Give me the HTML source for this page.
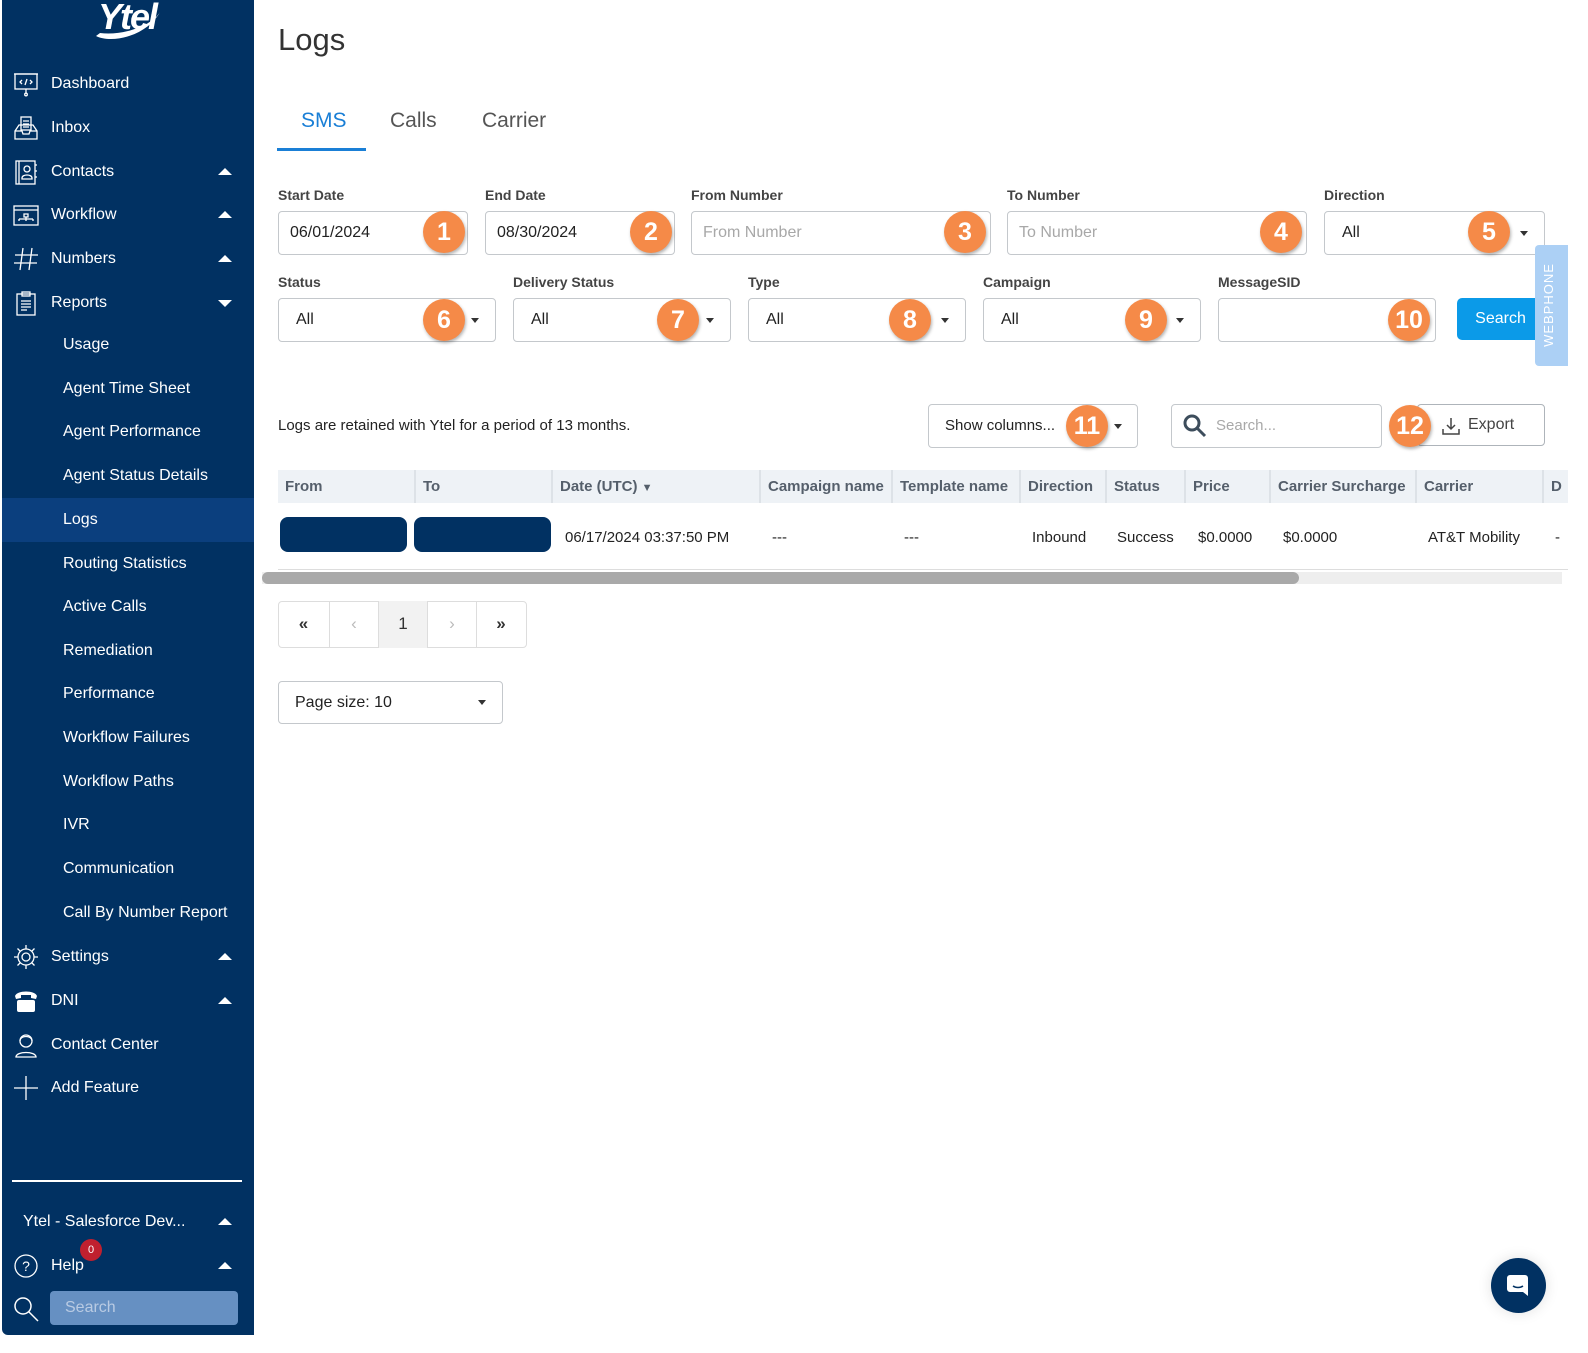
<!DOCTYPE html>
<html><head><meta charset="utf-8"><style>
*{box-sizing:border-box;margin:0;padding:0}
html,body{width:1588px;height:1353px;overflow:hidden}
body{position:relative;background:#fff;font-family:"Liberation Sans",sans-serif;color:#222}
.a{position:absolute}
#sb{left:2px;top:0;width:252px;height:1335px;background:#013162;border-radius:0 0 0 6px}
.it{position:absolute;left:51px;color:#fff;font-size:16px;line-height:20px}
.sub{left:63px}
.car{position:absolute;left:218px;width:0;height:0;border-left:7px solid transparent;border-right:7px solid transparent}
.up{border-bottom:7px solid #fff}.dn{border-top:7px solid #fff}
.ic{position:absolute;left:13px;width:26px;height:26px}
.lbl{position:absolute;font-size:14px;font-weight:bold;color:#444}
.inp{position:absolute;height:44px;border:1px solid #c4c8cc;border-radius:4px;font-size:16px;color:#222;padding:0 0 0 11px;line-height:42px;white-space:nowrap}
.ph{color:#a8a8a8}
.b{position:absolute;width:42px;height:42px;border-radius:50%;background:#f58a48;color:#fff;font-size:25px;font-weight:bold;text-align:center;line-height:42px;box-shadow:1px 2px 3px rgba(0,0,0,.3)}
.dd{position:absolute;width:0;height:0;border-left:4px solid transparent;border-right:4px solid transparent;border-top:5px solid #333}
.th{position:absolute;top:470px;height:33px;line-height:33px;font-size:15px;font-weight:bold;color:#555f6b;padding-left:7px;border-left:2px solid #dde2e7;white-space:nowrap;overflow:hidden}
.td{position:absolute;top:529px;font-size:15px;color:#222;white-space:nowrap}
.pg{position:absolute;top:601px;height:47px;width:49px;border-left:1px solid #ddd;text-align:center;line-height:46px;font-size:17px;color:#333}
</style></head><body>
<div id="sb" class="a"></div>
<div class="a" style="left:98px;top:-4px;color:#fff;font-size:36px;font-weight:bold;font-style:italic;letter-spacing:-2px">Ytel</div>
<svg class="a" style="left:92px;top:8px" width="72" height="34"><path d="M4 28 C20 36 55 28 68 4 C60 18 30 28 8 25 Z" fill="#fff"/></svg>

<svg class="ic" style="top:71px" viewBox="0 0 26 26" fill="none" stroke="#fff" stroke-width="1.3"><rect x="2" y="3" width="22" height="15"/><path d="M1 3h24M13 18v4"/><circle cx="13" cy="23.5" r="1.3"/><path d="M9 9l-2 2 2 2M17 9l2 2-2 2M14 8l-2 6"/></svg>
<svg class="ic" style="top:115px" viewBox="0 0 26 26" fill="none" stroke="#fff" stroke-width="1.3"><path d="M2 16l4-6h14l4 6v8H2zM2 16h7l1 3h6l1-3h7"/><rect x="8" y="2" width="10" height="13"/><path d="M10 6h6M10 9h6M10 12h6"/></svg>
<svg class="ic" style="top:159px" viewBox="0 0 26 26" fill="none" stroke="#fff" stroke-width="1.3"><rect x="3" y="2" width="19" height="23"/><path d="M6 2v23M22 6h2M22 12h2M22 18h2"/><circle cx="14" cy="10" r="3"/><path d="M9 19c0-4 10-4 10 0v1H9z"/></svg>
<svg class="ic" style="top:203px" viewBox="0 0 26 26" fill="none" stroke="#fff" stroke-width="1.3"><rect x="1" y="3" width="24" height="19"/><path d="M1 7h24M11 11h4v3h-4zM13 14v2M6 16h14M6 16v2M13 16v2M20 16v2"/></svg>
<svg class="ic" style="top:246px" viewBox="0 0 26 26" fill="none" stroke="#fff" stroke-width="1.3"><path d="M10 2L7 24M19 2l-3 22M2 9h23M1 17h23"/></svg>
<svg class="ic" style="top:290px" viewBox="0 0 26 26" fill="none" stroke="#fff" stroke-width="1.3"><rect x="4" y="4" width="18" height="21"/><rect x="9" y="2" width="8" height="4"/><path d="M8 11h10M8 14h10M8 17h10M8 20h6"/></svg>
<svg class="ic" style="top:944px" viewBox="0 0 26 26" fill="none" stroke="#fff" stroke-width="1.3"><circle cx="13" cy="13" r="4"/><circle cx="13" cy="13" r="8"/><path d="M13 1v4M13 21v4M1 13h4M21 13h4M4.5 4.5l3 3M18.5 18.5l3 3M4.5 21.5l3-3M18.5 7.5l3-3"/></svg>
<svg class="ic" style="top:988px" viewBox="0 0 26 26" fill="#fff"><path d="M2 8c2-6 20-6 22 0l-1 3-5-1V7H8v3l-5 1z"/><rect x="4" y="12" width="18" height="12" rx="2"/></svg>
<svg class="ic" style="top:1032px" viewBox="0 0 26 26" fill="none" stroke="#fff" stroke-width="1.3"><circle cx="13" cy="9" r="6"/><path d="M7 9c0-6 12-6 12 0M3 25c0-6 20-6 20 0z"/></svg>
<svg class="ic" style="top:1075px" viewBox="0 0 26 26" fill="none" stroke="#fff" stroke-width="1.3"><path d="M13 1v24M1 13h24"/></svg>
<svg class="ic" style="top:1253px" viewBox="0 0 26 26" fill="none" stroke="#fff" stroke-width="1.3"><circle cx="13" cy="13" r="11"/><text x="13" y="18" fill="#fff" stroke="none" font-size="14" text-anchor="middle" font-family="Liberation Sans">?</text></svg>
<svg class="ic" style="top:1296px" viewBox="0 0 26 26" fill="none" stroke="#fff" stroke-width="1.5"><circle cx="10" cy="10" r="8"/><path d="M16 16l9 9"/></svg>

<div class="a" style="left:2px;top:498px;width:252px;height:44px;background:#0b3f7e"></div>
<div class="it" style="top:74px">Dashboard</div>
<div class="it" style="top:118px">Inbox</div>
<div class="it" style="top:162px">Contacts</div><div class="car up" style="top:168px"></div>
<div class="it" style="top:205px">Workflow</div><div class="car up" style="top:211px"></div>
<div class="it" style="top:249px">Numbers</div><div class="car up" style="top:255px"></div>
<div class="it" style="top:293px">Reports</div><div class="car dn" style="top:300px"></div>
<div class="it sub" style="top:335px">Usage</div>
<div class="it sub" style="top:379px">Agent Time Sheet</div>
<div class="it sub" style="top:422px">Agent Performance</div>
<div class="it sub" style="top:466px">Agent Status Details</div>
<div class="it sub" style="top:510px">Logs</div>
<div class="it sub" style="top:554px">Routing Statistics</div>
<div class="it sub" style="top:597px">Active Calls</div>
<div class="it sub" style="top:641px">Remediation</div>
<div class="it sub" style="top:684px">Performance</div>
<div class="it sub" style="top:728px">Workflow Failures</div>
<div class="it sub" style="top:772px">Workflow Paths</div>
<div class="it sub" style="top:815px">IVR</div>
<div class="it sub" style="top:859px">Communication</div>
<div class="it sub" style="top:903px">Call By Number Report</div>
<div class="it" style="top:947px">Settings</div><div class="car up" style="top:953px"></div>
<div class="it" style="top:991px">DNI</div><div class="car up" style="top:997px"></div>
<div class="it" style="top:1035px">Contact Center</div>
<div class="it" style="top:1078px">Add Feature</div>
<div class="a" style="left:12px;top:1180px;width:230px;height:2px;background:#fff"></div>
<div class="it" style="left:23px;top:1212px">Ytel - Salesforce Dev...</div><div class="car up" style="top:1218px"></div>
<div class="it" style="top:1256px">Help</div><div class="car up" style="top:1262px"></div>
<div class="a" style="left:80px;top:1239px;width:22px;height:22px;border-radius:50%;background:#c0202f;color:#fff;font-size:11px;text-align:center;line-height:22px">0</div>
<div class="a" style="left:50px;top:1291px;width:188px;height:34px;background:#6690c2;border-radius:4px;color:#b9cbe3;font-size:16px;line-height:34px;padding-left:15px">Search</div>

<div class="a" style="left:278px;top:22px;font-size:31px;color:#333">Logs</div>
<div class="a" style="left:301px;top:109px;font-size:21px;color:#1a7fd6">SMS</div>
<div class="a" style="left:390px;top:109px;font-size:21px;color:#555">Calls</div>
<div class="a" style="left:482px;top:109px;font-size:21px;color:#555">Carrier</div>
<div class="a" style="left:277px;top:148px;width:89px;height:3px;background:#1a7fd6"></div>

<div class="lbl" style="left:278px;top:187px">Start Date</div>
<div class="lbl" style="left:485px;top:187px">End Date</div>
<div class="lbl" style="left:691px;top:187px">From Number</div>
<div class="lbl" style="left:1007px;top:187px">To Number</div>
<div class="lbl" style="left:1324px;top:187px">Direction</div>
<div class="inp" style="left:278px;top:211px;width:190px">06/01/2024</div>
<div class="inp" style="left:485px;top:211px;width:190px">08/30/2024</div>
<div class="inp ph" style="left:691px;top:211px;width:300px">From Number</div>
<div class="inp ph" style="left:1007px;top:211px;width:300px">To Number</div>
<div class="inp" style="left:1324px;top:211px;width:221px;padding-left:17px">All</div>
<div class="dd" style="left:1520px;top:231px"></div>

<div class="lbl" style="left:278px;top:274px">Status</div>
<div class="lbl" style="left:513px;top:274px">Delivery Status</div>
<div class="lbl" style="left:748px;top:274px">Type</div>
<div class="lbl" style="left:983px;top:274px">Campaign</div>
<div class="lbl" style="left:1218px;top:274px">MessageSID</div>
<div class="inp" style="left:278px;top:298px;width:218px;padding-left:17px">All</div><div class="dd" style="left:471px;top:318px"></div>
<div class="inp" style="left:513px;top:298px;width:218px;padding-left:17px">All</div><div class="dd" style="left:706px;top:318px"></div>
<div class="inp" style="left:748px;top:298px;width:218px;padding-left:17px">All</div><div class="dd" style="left:941px;top:318px"></div>
<div class="inp" style="left:983px;top:298px;width:218px;padding-left:17px">All</div><div class="dd" style="left:1176px;top:318px"></div>
<div class="inp" style="left:1218px;top:298px;width:218px"></div>
<div class="a" style="left:1457px;top:298px;width:87px;height:42px;background:#0b9ae8;border-radius:5px;color:#fff;font-size:16px;text-align:center;line-height:42px">Search</div>
<div class="a" style="left:1535px;top:245px;width:33px;height:121px;background:#acd0f5;border-radius:4px 0 0 4px;overflow:hidden"><div style="position:absolute;left:-44px;top:50px;width:120px;height:20px;transform:rotate(-90deg);color:#fff;font-size:13px;text-align:center;letter-spacing:1px">WEBPHONE</div></div>

<div class="a" style="left:278px;top:417px;font-size:15px">Logs are retained with Ytel for a period of 13 months.</div>
<div class="inp" style="left:928px;top:404px;width:210px;padding-left:16px;font-size:15px">Show columns...</div><div class="dd" style="left:1114px;top:424px"></div>
<div class="inp ph" style="left:1171px;top:404px;width:211px;padding-left:44px;font-size:15px">Search...</div>
<svg class="a" style="left:1182px;top:413px" width="26" height="26" fill="none" stroke="#3d4d5c" stroke-width="3"><circle cx="10" cy="10" r="7"/><path d="M15 15l8 8"/></svg>
<div class="inp" style="left:1417px;top:404px;width:128px;height:42px;line-height:40px;color:#444;padding-left:50px;border-color:#aeb4ba">Export</div>
<svg class="a" style="left:1441px;top:416px" width="20" height="20" fill="none" stroke="#444" stroke-width="1.5"><path d="M10 2v11M6 9l4 4 4-4M2 13v5h16v-5"/></svg>

<div class="b" style="left:423px;top:211px">1</div>
<div class="b" style="left:630px;top:211px">2</div>
<div class="b" style="left:944px;top:211px">3</div>
<div class="b" style="left:1260px;top:211px">4</div>
<div class="b" style="left:1468px;top:211px">5</div>
<div class="b" style="left:423px;top:299px">6</div>
<div class="b" style="left:657px;top:299px">7</div>
<div class="b" style="left:889px;top:299px">8</div>
<div class="b" style="left:1125px;top:299px">9</div>
<div class="b" style="left:1388px;top:299px">10</div>
<div class="b" style="left:1066px;top:405px">11</div>
<div class="b" style="left:1389px;top:405px">12</div>

<div class="a" style="left:278px;top:470px;width:1290px;height:33px;background:#eef2f6"></div>
<div class="th" style="left:278px;width:136px;border-left:none">From</div>
<div class="th" style="left:414px;width:137px">To</div>
<div class="th" style="left:551px;width:208px">Date (UTC) <span style="font-size:11px">&#9660;</span></div>
<div class="th" style="left:759px;width:132px">Campaign name</div>
<div class="th" style="left:891px;width:128px">Template name</div>
<div class="th" style="left:1019px;width:86px">Direction</div>
<div class="th" style="left:1105px;width:79px">Status</div>
<div class="th" style="left:1184px;width:85px">Price</div>
<div class="th" style="left:1269px;width:146px">Carrier Surcharge</div>
<div class="th" style="left:1415px;width:127px">Carrier</div>
<div class="th" style="left:1542px;width:26px">D</div>
<div class="a" style="left:280px;top:517px;width:127px;height:35px;background:#013162;border-radius:8px"></div>
<div class="a" style="left:414px;top:517px;width:137px;height:35px;background:#013162;border-radius:8px"></div>
<div class="td" style="left:565px">06/17/2024 03:37:50 PM</div>
<div class="td" style="left:772px">---</div>
<div class="td" style="left:904px">---</div>
<div class="td" style="left:1032px">Inbound</div>
<div class="td" style="left:1117px">Success</div>
<div class="td" style="left:1198px">$0.0000</div>
<div class="td" style="left:1283px">$0.0000</div>
<div class="td" style="left:1428px">AT&amp;T Mobility</div>
<div class="td" style="left:1555px">-</div>
<div class="a" style="left:278px;top:569px;width:1290px;height:1px;background:#ddd"></div>
<div class="a" style="left:262px;top:572px;width:1300px;height:12px;background:#eee"></div>
<div class="a" style="left:262px;top:572px;width:1037px;height:12px;background:#a9a9a9;border-radius:6px"></div>

<div class="a" style="left:278px;top:601px;width:249px;height:47px;border:1px solid #ddd;border-radius:4px"></div>
<div class="pg" style="left:279px;border-left:none;font-weight:bold">&laquo;</div>
<div class="pg" style="left:329px;color:#bbb">&lsaquo;</div>
<div class="pg" style="left:378px;background:#f2f2f2">1</div>
<div class="pg" style="left:427px;color:#bbb">&rsaquo;</div>
<div class="pg" style="left:476px;font-weight:bold">&raquo;</div>

<div class="inp" style="left:278px;top:681px;width:225px;height:43px;padding-left:16px">Page size: 10</div>
<div class="dd" style="left:478px;top:700px"></div>

<div class="a" style="left:1491px;top:1258px;width:55px;height:55px;border-radius:50%;background:#013162;box-shadow:0 0 14px rgba(0,0,0,.12)"></div>
<svg class="a" style="left:1505px;top:1272px" width="28" height="28"><path d="M5 3h15a3 3 0 0 1 3 3v18l-5-4H5a3 3 0 0 1-3-3V6a3 3 0 0 1 3-3z" fill="#fff"/><path d="M8 14c3 2 7 2 10 0" stroke="#013162" stroke-width="1.6" fill="none"/></svg>
</body></html>
